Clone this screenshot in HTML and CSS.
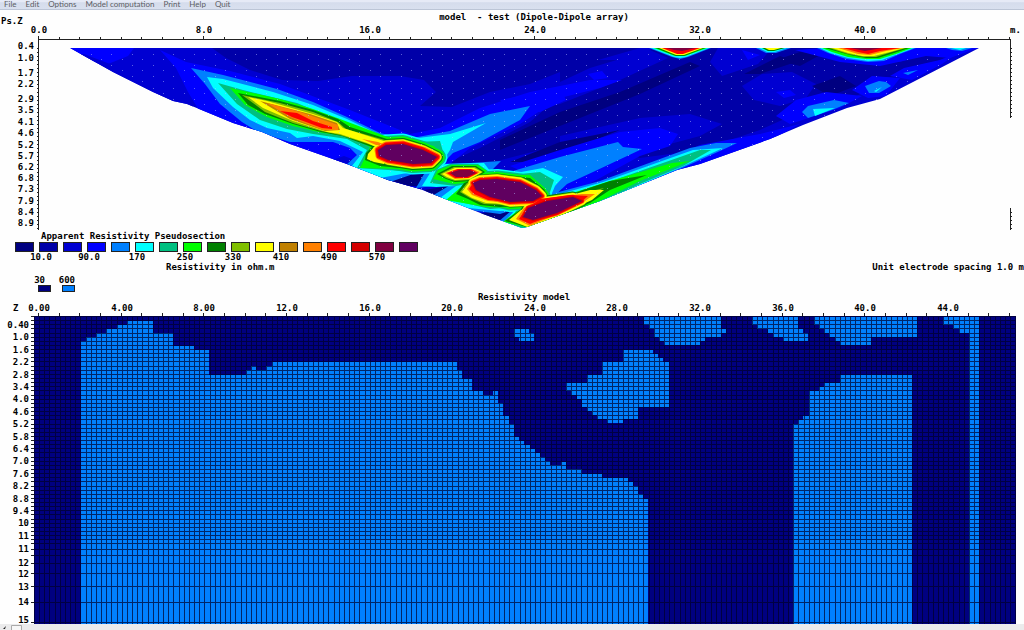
FILE: index.html
```html
<!DOCTYPE html>
<html lang="en">
<head>
<meta charset="utf-8">
<title>Resistivity model - test</title>
<link rel="stylesheet" href="styles.css">
</head>
<body>
<nav class="menu" aria-label="Main menu">
  <button type="button">File</button>
  <button type="button">Edit</button>
  <button type="button">Options</button>
  <button type="button">Model computation</button>
  <button type="button">Print</button>
  <button type="button">Help</button>
  <button type="button">Quit</button>
</nav>
<main>
  <svg class="plot" id="pseudo" viewBox="0 10 1024 221" role="img" aria-label="Apparent resistivity pseudosection">
    <defs>
      <clipPath id="section"><path d="M70 48L113 72L153 92L173 101L187 104L233 123L262 132L290 144L347 164L388 180L420 189L483 214L522 228L527 227L600 201L677 170L700 164L770 139L803 125L847 108L880 99L913 82L950 63L979 48Z"/></clipPath>
    </defs>
    <text x="534" y="20" class="mid">model  - test (Dipole-Dipole array)</text>
    <text x="1" y="24">Ps.Z</text>
    <text x="1010" y="33">m.</text>
    <g id="contours" clip-path="url(#section)"></g>
    <g id="pseudo-axes"></g>
  </svg>
  <section class="legend">
    <h2>Apparent Resistivity Pseudosection</h2>
    <div class="scale" id="scale"></div>
    <div class="values"><span>10.0</span><span>90.0</span><span>170</span><span>250</span><span>330</span><span>410</span><span>490</span><span>570</span></div>
    <div class="captions"><span>Resistivity in ohm.m</span><span>Unit electrode spacing 1.0 m</span></div>
    <div class="materials">
      <span class="material"><span>30</span><i class="chip c0"></i></span>
      <span class="material"><span>600</span><i class="chip c4"></i></span>
    </div>
  </section>
  <svg class="plot" id="model" viewBox="0 292 1024 332" role="img" aria-label="Resistivity model">
    <text x="524" y="300" class="mid">Resistivity model</text>
    <text x="13" y="311">Z</text>
    <rect class="c0" x="34" y="316" width="982" height="308"/>
    <g class="c4">
      <path d="M81 624V341H86V337H96V333H106V329H117V325H127V321H153V333H173V346H194V350H209V375H246V370H251V366H256V370H266V366H272V362H457V370H462V379H472V391H483V395H493V391H498V403H503V416H509V424H514V437H519V441H524V445H530V449H535V453H540V457H545V461H550V465H561V462H566V469H582V474H602V478H628V482H633V486H638V494H643V499H648V624Z"/>
      <path d="M514 329H529V333H534V341H519V337H514Z"/>
      <path d="M623 350H653V354H658V358H663V362H669V407H638V419H623V423H607V419H597V415H592V411H587V407H582V399H577V395H571V391H566V383H587V375H602V362H623Z"/>
      <path d="M644 317H721V329H726V333H721V337H705V341H700V345H664V341H659V337H654V329H649V325H644Z"/>
      <path d="M752 317H798V329H803V333H808V341H783V337H773V333H768V329H757V325H752Z"/>
      <path d="M814 317H917V337H871V345H840V341H835V337H829V333H824V329H819V325H814Z"/>
      <path d="M943 317H979V624H969V333H959V329H953V325H943Z"/>
      <path d="M840 375H912V624H793V424H798V420H803V416H809V391H819V387H824V383H840Z"/>
    </g>
    <g id="model-grid"></g>
  </svg>
</main>
<footer class="strip"><svg class="corner" viewBox="0 0 24 6" aria-hidden="true"><path class="arrow" d="M6 2L3 5L5 5Z"/><path class="box" d="M11.5 6V1.5H21.5V6"/></svg></footer>
<script src="plot.js"></script>
</body>
</html>
```
FILE: styles.css
```css
* { box-sizing: border-box; }
body {
  margin: 0;
  background: #fefefe;
  color: #000;
  font: bold 9px/10px "DejaVu Sans Mono", "Liberation Mono", monospace;
  overflow: hidden;
}
.menu {
  display: flex;
  gap: 9px;
  height: 10px;
  padding-left: 4px;
  background: linear-gradient(#e6eaf6 20%, #d5dcec 30%, #d9e0ef);
  border-bottom: 1px solid #bcc5d6;
}
.menu button {
  border: 0;
  padding: 0;
  background: none;
  color: #5c5d64;
  font: 8px/8px Lato, "Open Sans", sans-serif;
  height: 8px;
}
.plot { display: block; width: 100%; height: auto; }
.plot text { white-space: pre; }
.mid { text-anchor: middle; }
.end { text-anchor: end; }
.line { stroke: #222; fill: none; shape-rendering: crispEdges; }
.grid { stroke: #000028; stroke-opacity: .7; fill: none; shape-rendering: crispEdges; }
.dots { fill: #b8c0ff; fill-opacity: .5; }
.legend h2 { margin: 0; padding-left: 41px; font: inherit; }
.scale { display: flex; gap: 5px; padding: 1px 0 0 15px; }
.scale i { width: 19px; height: 10px; border: 1px solid #222; }
.values { display: flex; padding-left: 17px; }
.values span { width: 48px; text-align: center; }
.captions { display: flex; justify-content: space-between; padding-left: 166px; white-space: nowrap; }
.materials { display: flex; gap: 4px; padding: 4px 0 0 31px; height: 20px; }
.material { width: 20px; white-space: nowrap; display: flex; flex-direction: column; align-items: flex-end; line-height: 9px; }
.material:first-child > span { margin-right: 6px; }
.chip { width: 13px; height: 7px; border: 1px solid #222; }
.strip { height: 6px; background: #ebebec; }
.corner { display: block; width: 24px; height: 6px; }
.arrow { fill: #222; }
.box { fill: #f7f7f7; stroke: #aaa; }
.c0 { fill: #000080; background: #000080; }
.c1 { fill: #0000a8; background: #0000a8; }
.c2 { fill: #0000d2; background: #0000d2; }
.c3 { fill: #0000ff; background: #0000ff; }
.c4 { fill: #0080ff; background: #0080ff; }
.c5 { fill: #00ffff; background: #00ffff; }
.c6 { fill: #00c080; background: #00c080; }
.c7 { fill: #00ff00; background: #00ff00; }
.c8 { fill: #008000; background: #008000; }
.c9 { fill: #80c000; background: #80c000; }
.c10 { fill: #ffff00; background: #ffff00; }
.c11 { fill: #c08000; background: #c08000; }
.c12 { fill: #ff8000; background: #ff8000; }
.c13 { fill: #ff0000; background: #ff0000; }
.c14 { fill: #d40000; background: #d40000; }
.c15 { fill: #800040; background: #800040; }
.c16 { fill: #600060; background: #600060; }
.h5 { stroke: #00ffff; }
.h6 { stroke: #00c080; }
.h7 { stroke: #00ff00; }
.h8 { stroke: #008000; }
.h9 { stroke: #80c000; }
.h10 { stroke: #ffff00; }
.h12 { stroke: #ff8000; }
.h13 { stroke: #ff0000; }
.h14 { stroke: #d40000; }
```
FILE: plot.js
```js
const NS = "http://www.w3.org/2000/svg";
const add = (parent, tag, attrs, text) => {
  const el = document.createElementNS(NS, tag);
  for (const k in attrs) el.setAttribute(k, attrs[k]);
  if (text !== undefined) el.textContent = text;
  parent.appendChild(el);
  return el;
};
const METRE = 20.66;
const ORIGIN = 39;

/* colour scale */
const scale = document.getElementById("scale");
for (let i = 0; i < 17; i++) {
  const chip = document.createElement("i");
  chip.className = "c" + i;
  scale.appendChild(chip);
}

/* background levels, painted in this order */
const background = [
  [2, "60,40 990,40 990,235 60,235"],
  [1, "212,48 226,58 250,70 282,80 318,81 352,76 400,76 424,80 436,92 420,106 452,107 490,92 530,84 570,68 640,48"],
  [1, "560,60 640,60 652,48 850,48 866,70 880,82 850,100 800,112 760,130 700,150 640,158 590,140 540,150 470,168 440,166 480,148 530,122 560,96"],
  [2, "560,82 590,68 650,50 668,58 620,80 560,104 520,112"],
  [2, "710,62 718,48 772,48 758,64 722,76"],
  [2, "742,86 762,74 792,72 816,84 806,98 780,106 754,100"],
  [2, "560,136 640,118 690,114 722,124 700,136 640,152 560,160"],
  [0, "500,140 560,112 620,92 690,62 700,66 640,94 570,122 500,150"],
  [0, "744,74 780,56 796,62 760,74"],
  [0, "800,52 822,54 800,66 776,60"],
  [0, "510,162 560,142 620,130 590,142 530,162"],
  [0, "812,86 840,76 856,86 830,96"],
  [1, "850,52 900,62 930,52 962,50 900,78 866,76"],
  [3, "70,48 134,48 128,56 108,64 92,62"],
  [3, "160,50 186,62 230,71 280,84 350,110 410,134 440,128 480,108 530,92 590,80 622,80 600,88 560,98 520,124 470,148 440,172 420,190 340,168 260,136 200,112 188,92 176,68"],
  [2, "84,54 110,64 150,82 186,98 196,110 180,112 140,94 60,54"],
  [3, "500,100 560,88 566,100 540,112 510,112"],
  [3, "588,74 602,71 608,78 594,80"],
  [3, "510,166 560,150 620,132 660,128 678,134 670,146 640,156 600,178 570,194 640,170 700,145 760,134 800,124 760,146 600,206"],
  [3, "776,116 796,100 826,92 862,96 840,108 790,124"],
  [3, "852,90 872,76 900,78 886,96 868,98"],
  [3, "890,76 904,68 940,60 956,54 942,64 912,80"],
  [3, "795,50 824,48 918,48 978,48 950,58 926,56 880,66 840,62"],
  [2, "320,164 344,156 360,162 350,168"],
  [2, "384,176 430,162 450,160 424,178 420,192"],
  [0, "378,178 424,166 432,168 418,186 400,186"],
  [0, "424,190 462,184 470,188 444,204"],
  [0, "478,214 520,206 508,220 490,220"],
  [3, "760,55 742,50 748,60"],
  [3, "776,92 790,90 796,95 784,98"]
];

/* anomaly contours from 110 ohm.m upwards */
const contours = [
  [4, "191,68 223,75 277,89 313,102 347,117 380,133 407,139 450,131 490,114 530,106 520,120 480,142 453,153 445,161 425,170 390,182 345,166 357,155 350,148 333,142 313,142 290,142 258,132 242,122 220,104 205,84"],
  [5, "207,77 223,79 273,92 313,105 347,119 380,135 410,139 450,134 486,123 453,142 450,150 445,158 437,165 407,173 380,178 352,166 363,152 340,141 313,136 297,138 290,133 267,128 250,120 233,107 213,88"],
  [6, "218,83 243,90 297,103 340,121 380,137 415,142 440,141 444,155 434,163 404,171 357,168 367,150 347,139 313,134 287,129 260,120 237,104"],
  [7, "230,88 280,99 313,109 340,119 393,139 418,142 434,146 442,157 430,164 404,169 360,168 370,147 347,136 323,133 293,126 267,117 245,105"],
  [8, "238,93 280,101 313,110 338,119 350,127 390,140 420,144 436,151 441,158 428,164 400,168 380,166 365,160 366,153 372,147 342,136 321,132 293,124 265,114 248,105"],
  [9, "242,95 280,103 313,112 338,122 346,129 392,142 380,148 362,142 340,135 321,131 293,123 265,112"],
  [10, "248,97 267,101 313,114 337,122 343,128 387,142 376,147 367,143 340,134 327,132 293,121 263,108"],
  [10, "368,154 374,147 384,143 384,164 374,162 367,159"],
  [11, "260,101 310,114 337,123 340,130 325,131 290,119"],
  [12, "267,103 300,112 338,125 338,130 323,130 290,117"],
  [12, "362,139 378,142 388,146 376,145"],
  [13, "280,111 297,113 313,121 332,127 332,129 322,128 306,122 292,117"],
  [4, "416,188 424,174 440,164 470,163 501,161 490,172 500,175 560,157 618,142 623,147 642,149 593,172 567,184 550,200 524,206 500,214 470,210 432,196 452,184"],
  [5, "422,186 432,170 446,164 484,163 490,171 482,177 510,174 543,168 563,177 555,186 550,198 530,208 500,211 468,208 440,198 456,186 436,187"],
  [6, "430,183 436,170 450,164 478,164 488,171 476,182 456,186"],
  [7, "433,179 438,170 452,165 478,165 487,171 474,182 454,184"],
  [8, "437,174 452,166 476,166 485,172 472,181 455,182 446,179"],
  [9, "440,174 454,167 475,167 483,172 470,180 455,181 446,178"],
  [10, "442,174 455,168 474,168 482,172 470,179 455,180 447,177"],
  [12, "445,173 457,169 472,169 480,172 469,178 455,179"],
  [13, "447,173 458,169 471,169 478,173 468,178 455,178"],
  [15, "450,173 459,170 470,170 476,173 467,177 456,177"],
  [6, "510,175 540,172 554,180 550,192 530,206 490,209 456,201 462,185 480,180"],
  [7, "446,200 460,188 474,179 510,175 530,175 546,189 542,202 520,208 486,207"],
  [8, "456,194 464,183 476,178 497,176 520,177 530,178 545,190 538,203 516,206 500,207 480,205 468,199"],
  [9, "460,192 467,183 480,178 500,177 526,182 543,194 536,203 510,205 484,204 470,198"],
  [10, "462,192 468,184 480,179 500,178 540,192 536,202 510,204 486,203 472,198"],
  [12, "467,189 471,183 480,180 500,184 500,202 488,201 472,195"],
  [13, "469,189 473,183 482,180 500,184 500,201 488,200 474,194"],
  [4, "491,228 512,210 540,197 600,181 690,148 716,143 737,143 720,151 640,187 600,205 530,230"],
  [5, "499,228 515,210 542,199 603,182 693,150 723,148 677,169 640,185 600,204 530,230"],
  [6, "505,228 516,211 550,200 603,184 700,150 711,150 683,166 640,184 600,203 530,230"],
  [7, "503,222 516,212 560,197 610,181 672,163 690,161 660,173 640,181 596,203 530,228"],
  [8, "505,221 520,210 560,199 583,190 610,181 647,175 610,190 590,203 530,228"],
  [9, "570,196 604,188 590,196"],
  [10, "509,220 521,210 560,198 590,190 604,190 592,200 530,228"],
  [12, "516,219 524,208 540,199 582,194 595,194 582,203 530,226"],
  [13, "519,219 526,209 540,199 570,195 588,196 580,203 530,224"],
  [4, "649,48 711,48 688,57 680,59 672,57"],
  [5, "651,48 709,48 686,57 680,58 674,57"],
  [7, "654,48 707,48 685,56 675,56"],
  [8, "656,48 705,48 684,56 676,56"],
  [10, "659,48 703,48 684,55 676,55"],
  [13, "662,48 700,48 683,54 677,54"],
  [15, "666,48 696,48 682,51 674,50"],
  [4, "756,48 791,48 776,53 766,53"],
  [5, "759,48 787,48 775,52 767,52"],
  [8, "762,48 785,48 774,51 768,51"],
  [10, "765,48 781,48 774,50 769,50"],
  [4, "817,48 916,48 900,54 884,61 868,62 846,59 828,53"],
  [5, "820,48 914,48 898,54 882,60 868,61 848,58 830,53"],
  [7, "822,48 912,48 896,54 880,59 866,59 848,57 832,52"],
  [8, "825,48 909,48 894,53 878,58 866,58 850,55"],
  [9, "829,48 906,48 892,52 876,57 864,57 848,54"],
  [10, "832,48 904,48 890,52 874,56 862,56 848,53"],
  [12, "838,48 902,48 886,51 870,55 858,54"],
  [13, "843,48 900,48 880,51 868,54 858,52"],
  [15, "850,48 882,48 865,51"],
  [4, "946,48 972,48 962,51 952,50"],
  [5, "951,48 966,48 960,50"],
  [4, "865,86 879,81 886,82 891,86 879,93 869,93"],
  [5, "874,91 882,87 876,92"],
  [4, "802,112 808,106 834,100 849,103 832,110 808,118"],
  [5, "813,109 835,108 815,116"],
  [4, "903,73 918,70 908,75"]
];

/* closed highs: the core outline and the ring widths around it */
const cores = [
  ["378,150 386,145 403,144 423,150 437,157 431,163 413,164 388,160 379,156", {5: 21, 6: 18, 7: 15, 8: 12, 9: 10, 10: 9, 12: 7, 13: 5, 14: 2}],
  ["473,183 480,180 497,179 520,182 536,190 542,196 533,201 510,202 490,197 476,190", {5: 20, 6: 17, 7: 14, 8: 11, 9: 10, 10: 9, 12: 6, 13: 4, 14: 2}],
  ["523,217 528,208 547,201 573,197 582,201 557,213 533,220", {8: 11, 9: 9, 10: 8, 12: 5, 13: 4, 14: 2}]
];

const plot = document.getElementById("contours");
background.forEach(([level, points]) => add(plot, "polygon", {class: "c" + level, points}));
for (let level = 4; level < 16; level++) {
  contours.filter(c => c[0] === level)
    .forEach(([l, points]) => add(plot, "polygon", {class: "c" + l, points}));
  cores.filter(c => c[1][level]).forEach(([points, rings]) =>
    add(plot, "polygon", {class: `c${level} h${level}`, points, "stroke-width": rings[level], "stroke-linejoin": "round"}));
}
cores.forEach(([points]) => add(plot, "polygon", {class: "c16", points}));

/* data points */
let dots = "";
for (let n = 0; n < 16; n++) {
  const y = Math.round(54 + n * 11.2);
  for (let k = 0; k < 92; k++) {
    const x = Math.round(ORIGIN + METRE * 1.5 + k * METRE / 2);
    dots += `M${x} ${y + (k % 2) * 5}h1v1h-1z`;
  }
}
add(plot, "path", {class: "dots", d: dots});

/* pseudosection axes */
const axes = document.getElementById("pseudo-axes");
let d = "M38.5 230V39.5H1010.5V118M1010.5 208V230";
for (let m = 0; m <= 47; m++) {
  const x = Math.round(ORIGIN + m * METRE) - 0.5;
  d += `M${x} ${m % 8 ? 37 : 36}V39`;
}
const depths = [["0.4", 45], ["1.0", 57], ["1.7", 72], ["2.2", 83], ["2.9", 98], ["3.5", 109], ["4.1", 121], ["4.6", 132], ["5.2", 144], ["5.7", 155], ["6.2", 166], ["6.8", 177], ["7.3", 188], ["7.9", 200], ["8.4", 211], ["8.9", 222]];
for (let y = 48; y < 230; y += 4) {
  d += `M37 ${y + 0.5}h2`;
  if (y < 118 || y > 208) d += `M1010 ${y + 0.5}h2`;
}
add(axes, "path", {class: "line", d});
depths.forEach(([t, y]) => add(axes, "text", {x: 34, y: y + 4, class: "end"}, t));
for (let m = 0; m <= 40; m += 8)
  add(axes, "text", {x: Math.round(ORIGIN + m * METRE), y: 33, class: "mid"}, m.toFixed(1));

/* model mesh, ticks and labels */
const mesh = document.getElementById("model-grid");
let g = "";
for (let c = 0; c <= 190; c++) g += `M${Math.round(34 + c * METRE / 4) + 0.5} 316V624`;
const rows = [];
for (let r = 0; r < 55; r++) rows.push(Math.round(316 + r * 4.135));
rows.push(543, 549, 555, 563, 573, 586, 602, 622);
rows.forEach(y => { g += `M34 ${y + 0.5}H1016`; });
add(mesh, "path", {class: "grid", d: g});
let t = "";
rows.forEach(y => { t += `M31 ${y + 0.5}h3`; });
for (let m = 0; m <= 47; m++) t += `M${Math.round(ORIGIN + m * METRE) - 0.5} 313V316`;
add(mesh, "path", {class: "line", d: t});
const names = ["0.40", "1.0", "1.6", "2.2", "2.8", "3.4", "4.0", "4.6", "5.2", "5.8", "6.4", "7.0", "7.6", "8.2", "8.8", "9.4", "10", "11"];
names.forEach((s, i) => add(mesh, "text", {x: 29, y: Math.round(328 + i * 12.4), class: "end"}, s));
[["11", 552], ["12", 566], ["12", 577], ["13", 590], ["14", 605], ["15", 623]]
  .forEach(([s, y]) => add(mesh, "text", {x: 29, y, class: "end"}, s));
for (let m = 0; m <= 44; m += 4)
  add(mesh, "text", {x: Math.round(ORIGIN + m * METRE), y: 311, class: "mid"}, m < 10 ? m.toFixed(2) : m.toFixed(1));
```
